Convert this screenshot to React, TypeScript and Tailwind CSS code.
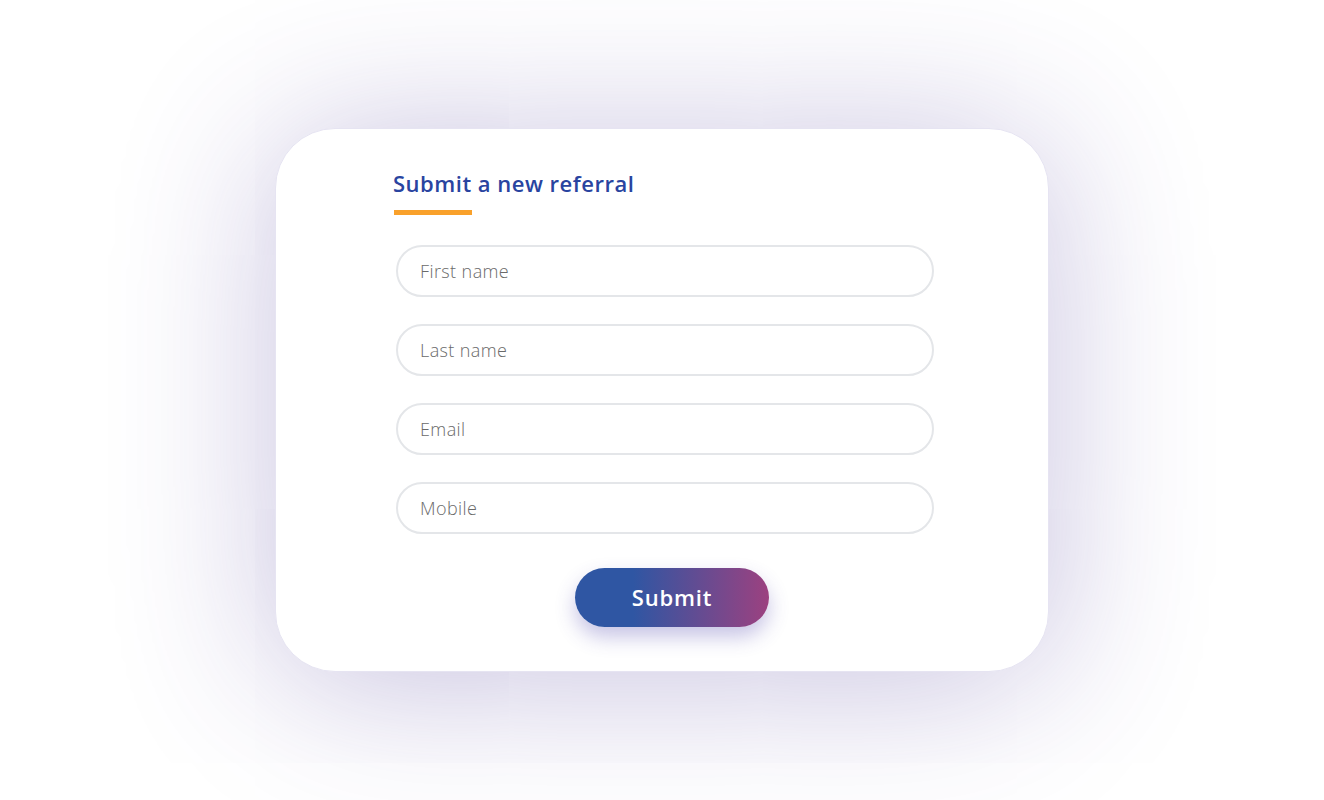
const fields = ["First name", "Last name", "Email", "Mobile"];

export default function App() {
  return (
    <div className="flex h-[800px] w-full items-center justify-center bg-white font-['Open_Sans',sans-serif]">
      <div className="flex h-[544px] w-[774px] flex-col rounded-[60px] border border-[#e6e4f2] bg-white pt-[40px] shadow-[0_10px_160px_rgba(72,52,150,0.32)]">
        <div className="pl-[117px]">
          <h1 className="text-[22px] font-semibold leading-[28px] tracking-[0.5px] text-[#2944a0]">
            Submit a new referral
          </h1>
          <div className="ml-px mt-[13px] h-[5px] w-[78px] bg-[#f9a12b]" />
        </div>
        <form className="mt-[30px] flex flex-col gap-[27px] pl-[120px]">
          {fields.map((f) => (
            <input
              key={f}
              type="text"
              placeholder={f}
              className="h-[52px] w-[538px] rounded-full border-2 border-[#e4e6e9] bg-white px-[22px] text-[18px] font-light tracking-[0.4px] text-[#555] outline-none placeholder:text-[#6a6a6a]"
            />
          ))}
        </form>
        <div className="mt-[34px] flex justify-center pl-[20px]">
          <button
            type="button"
            className="h-[59px] w-[194px] rounded-full bg-linear-to-r/srgb from-[#2f56a3] from-30% to-[#9c4180] text-[22px] font-semibold tracking-[0.8px] text-white shadow-[0_10px_20px_rgba(70,60,170,0.3)]"
          >
            Submit
          </button>
        </div>
      </div>
    </div>
  );
}
